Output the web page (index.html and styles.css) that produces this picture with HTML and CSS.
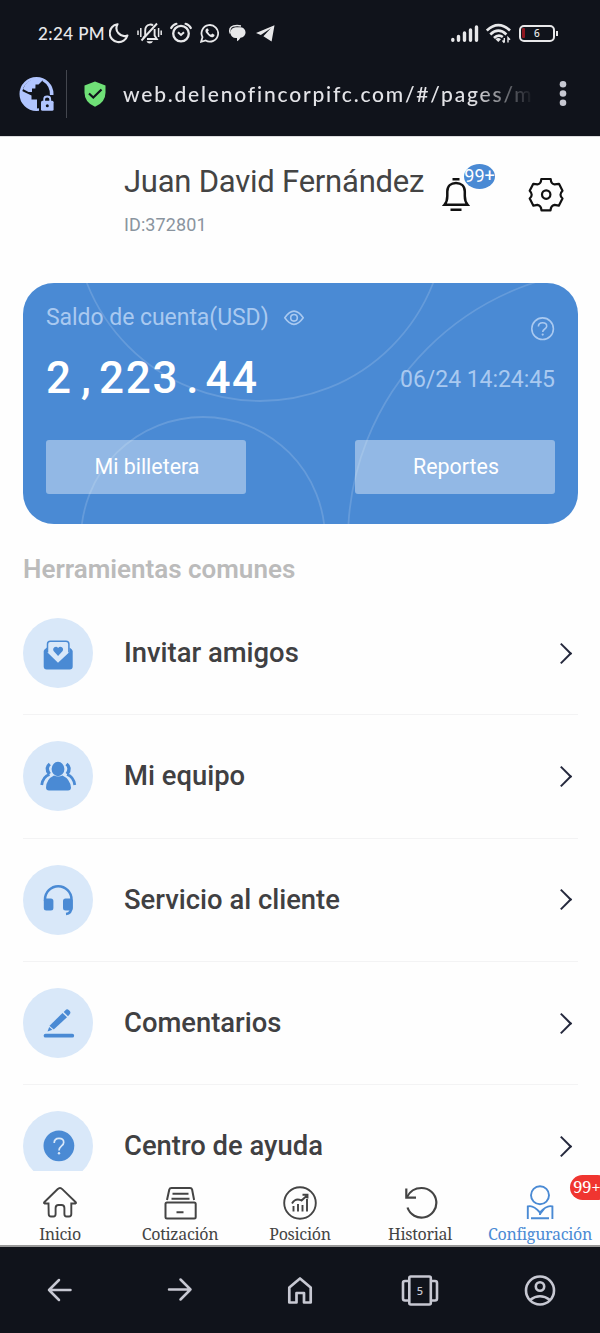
FILE: index.html
```html
<!DOCTYPE html>
<html lang="es">
<head>
<meta charset="utf-8">
<title>Configuración</title>
<link rel="stylesheet" href="styles.css">
</head>
<body>
<div class="phone">
  <header class="chrome">
    <div class="status">
      <span class="time">2:24 PM</span>
      <div class="status-icons">
        <svg width="20" height="22" viewBox="109 22 20 22"><path d="M117.5 24.2A9 9 0 1 0 127.4 35.5A8 8 0 0 1 117.5 24.2Z" fill="none" stroke="#e8e8ea" stroke-width="2.1" stroke-linejoin="round"/></svg>
        <svg width="25" height="22" viewBox="137 22 25 22"><g fill="none" stroke="#e8e8ea" stroke-width="1.9"><path d="M143.5 39V37.5L145.2 35.5V30.5Q145.2 25.5 149.8 24.6Q152 24.3 153 25.6M154.6 29V35.5L156.8 39H147M157 23.5L141.5 40.5"/><path d="M138 30.5V35M140.8 28V37M158.6 28V37M161.2 30.5V35" stroke-width="1.5"/></g><path d="M146.5 41.3H153Q152 43.6 149.7 43.6T146.5 41.3Z" fill="#e8e8ea"/></svg>
        <svg width="22" height="22" viewBox="170 22 22 22"><g fill="none" stroke="#e8e8ea"><circle cx="181" cy="33.6" r="7.8" stroke-width="2.3"/><path d="M171.2 28Q172.5 25 176.4 23.8M190.8 28Q189.5 25 185.6 23.8" stroke-width="2.2" stroke-linecap="round"/><path d="M178 32.3L181 35L184 32.3" stroke-width="2"/></g></svg>
        <svg width="19" height="22" viewBox="200 22 19 22"><path d="M201.1 41.8L202.5 37.2A8.3 8.3 0 1 1 205.7 40.5Z" fill="none" stroke="#e8e8ea" stroke-width="1.8"/><path d="M206.7 28.4C205 29.5 205 31.5 206.7 33.6C209 36.6 211.5 37.8 213.2 37C214.6 36.4 214.6 35.4 214.4 34.7L212.3 33.6L211 34.8Q208.8 34 207.8 31.6L208.8 30.5L207.9 28.4Z" fill="#e8e8ea"/></svg>
        <svg width="21" height="22" viewBox="227 22 21 22"><path d="M235.8 27.2H240A5.3 5.3 0 0 1 240.5 37.8Q239.3 40.2 237 41.3V38H235.8A5.4 5.4 0 0 1 235.8 27.2Z" fill="#e8e8ea"/><path d="M230.3 33.5Q228.3 27.5 233.5 25.9Q237 25.2 241 25.9" fill="none" stroke="#e8e8ea" stroke-width="1.5"/></svg>
        <svg width="19" height="22" viewBox="256 22 19 22"><path d="M274.5 25.2L256 33.1L260.8 35L270.8 28.3L263.4 36.2L271.6 41.4Z" fill="#e8e8ea"/></svg>
      </div>
      <div class="device-icons">
        <svg width="28" height="22" viewBox="452 22 28 22"><path d="M453.8 40.3V39.5M459.5 40.3V36.5M465.5 40.3V33M471.5 40.3V30M477.5 40.3V27" stroke="#e8e8ea" stroke-width="3.4" stroke-linecap="round"/></svg>
        <svg width="26" height="22" viewBox="486 22 26 22"><g fill="none" stroke="#e8e8ea" stroke-width="2.7"><path d="M486.8 30.5Q498.3 19.8 510 30.5M490.3 34.4Q498.3 27 506.4 34.4M494 38Q498.3 33.8 502.8 37"/></g><path d="M495.5 39.2Q498.3 37 501 39.2L498.3 42Z" fill="#e8e8ea"/><path d="M504.3 38V42.5M502.5 40.5L504.3 42.7M508 42.5V37.5L510 39.7" fill="none" stroke="#e8e8ea" stroke-width="1.4"/></svg>
        <div class="battery"><i></i><span>6</span></div>
      </div>
    </div>
    <div class="urlbar">
      <svg class="globe" width="36" height="36" viewBox="19 75 36 36"><circle cx="36.5" cy="93" r="15.7" fill="none" stroke="#b1c5ff" stroke-width="2.6"/><path d="M22 90L31.5 94.5V98.5H37V108.8Q29 109 24 103Q20 97 22 90Z" fill="#b1c5ff"/><path d="M23 88Q26 79.5 35 77.5H42V80L38.5 83.5H35.5V87.5H32V91H28.5Z" fill="#b1c5ff"/><path d="M42.5 79.5Q51 83 51.2 92L50 96L42 95L36.5 93.8H31.5V91.5L35.7 88.2L36 84H39.8Q42.8 83 42.5 79.5Z" fill="#10131b"/><path d="M39 94H56V112H39Z" fill="#10131b"/><path d="M51.2 94Q51.5 84 43 79" fill="none" stroke="#b1c5ff" stroke-width="2.6"/><rect x="41" y="99.8" width="12.6" height="10" rx="1.5" fill="#b1c5ff"/><path d="M44.2 100.5V98Q44.2 95.5 47.2 95.5T50.2 98V100.5" fill="none" stroke="#b1c5ff" stroke-width="1.8"/><circle cx="47.3" cy="104.8" r="1.5" fill="#10131b"/></svg>
      <i class="divider"></i>
      <svg class="shield" width="22" height="26" viewBox="83.5 80.5 22 26"><path d="M94.5 81L105 85V92Q105 102 94.5 106.2Q84 102 84 92V85Z" fill="#6fe077"/><path d="M88.5 93L92.8 97L101 89" fill="none" stroke="#10131b" stroke-width="2.2"/></svg>
      <span class="url">web.delenofincorpifc.com/#/pages/m</span>
      <svg class="dots" width="8" height="28" viewBox="559 80 8 28"><g fill="#c7c8d2"><circle cx="563" cy="84.3" r="3.3"/><circle cx="563" cy="93.5" r="3.3"/><circle cx="563" cy="102.7" r="3.3"/></g></svg>
    </div>
  </header>

  <main class="page">
    <section class="profile">
      <div class="who">
        <h1>Juan David Fernández</h1>
        <p>ID:372801</p>
      </div>
      <div class="bell">
        <svg width="28" height="36" viewBox="442 177 28 36"><path d="M452.5 179.2H459.5M450.5 209.7H461.5" stroke="#111" stroke-width="2.6"/><path d="M444.5 204.8Q447.3 201.5 447.3 196V191.5C447.3 186 451 183 456 183S464.8 186 464.8 191.5V196Q464.8 201.5 467.6 204.8Z" fill="none" stroke="#111" stroke-width="2.5"/></svg>
        <span class="bell-badge">99+</span>
      </div>
      <svg class="gear" width="36" height="36" viewBox="528 177 36 36"><path d="M541.3 179H550.7Q551 184 554.5 184.4L559 183.8L562.5 190.8Q558.5 194.8 562.5 198.5L558.8 205.7L554.5 204.9Q551 205.5 550.5 210.3H541.5Q541 205.5 537.5 204.9L533.4 205.7L529.7 198.5Q533.7 194.8 529.7 190.8L533.3 183.8L537.5 184.4Q541 184 541.3 179Z" fill="none" stroke="#111" stroke-width="2.2" stroke-linejoin="round"/><circle cx="546.2" cy="194.6" r="4.2" fill="none" stroke="#111" stroke-width="2.2"/></svg>
    </section>

    <section class="card">
      <svg class="rings" width="555" height="241" viewBox="23 283 555 241"><g fill="none" stroke="#fff" stroke-opacity=".15" stroke-width="1.8"><circle cx="260" cy="215" r="186"/><circle cx="203" cy="539" r="122"/><circle cx="619" cy="540" r="271"/></g></svg>
      <div class="card-head">
        <span class="label">Saldo de cuenta(USD)</span>
        <svg class="eye" width="20" height="16" viewBox="284 310 20 16"><g fill="none" stroke="#a9c9f0" stroke-width="1.6"><path d="M284.8 317.8Q294 304.5 303.2 317.8Q294 331 284.8 317.8Z"/><circle cx="294" cy="317.8" r="3.3"/></g></svg>
        <svg class="help" width="24" height="24" viewBox="531 317 24 24"><g fill="none" stroke="#a9c9f0" stroke-width="1.6"><circle cx="541.7" cy="328.7" r="10.8" transform="translate(.9)"/><path d="M538.4 326.5Q538.4 322.8 542.6 322.8T546.7 326.3C546.7 329 542.7 329 542.7 332"/></g><circle cx="542.7" cy="334.6" r="1.1" fill="#a9c9f0"/></svg>
      </div>
      <div class="balance">
        <strong>2<span>,</span>223<span>.</span>44</strong>
        <time>06/24 14:24:45</time>
      </div>
      <div class="actions"><button>Mi billetera</button><button>Reportes</button></div>
    </section>

    <h2>Herramientas comunes</h2>
    <ul class="tools">
      <li><i class="disc"><svg width="40" height="40" viewBox="38 633 40 40"><path d="M43.7 651Q43.7 649.5 47 647.5V652L58 662.8L69.5 652V647.5Q72.7 649.5 72.7 651V666.5Q72.7 669.5 69.7 669.5H46.7Q43.7 669.5 43.7 666.5Z" fill="#4a8ad4"/><path d="M47.5 652.5V644Q47.5 641.2 50.3 641.2H66Q68.9 641.2 68.9 644V652.5" fill="none" stroke="#4a8ad4" stroke-width="1.5"/><path d="M58.1 656L53.8 651.3Q52.3 649 54.3 647.3Q56.5 645.8 58.1 648Q59.8 645.8 62 647.3Q64 649 62.4 651.3Z" fill="#4a8ad4"/></svg></i><span>Invitar amigos</span><b class="chev"></b></li>
      <li><i class="disc"><svg width="40" height="40" viewBox="38 756.5 40 40"><g fill="#4a8ad4"><ellipse cx="58" cy="769.5" rx="6.4" ry="7.2"/><path d="M46 788Q46.5 779.5 54 776Q58 778 62.5 776Q70 779.5 71 788Q71 791 68 791H49Q46 791 46 788Z"/></g><g fill="none" stroke="#4a8ad4"><path d="M49.8 764.5Q44.8 768.5 49.5 774.5M66.5 764.5Q71.5 768.5 67 774.5" stroke-width="3.4"/><path d="M49.5 775Q43 777 41.7 785.5M67 775Q73.5 777 74.8 785.5" stroke-width="2.8"/></g></svg></i><span>Mi equipo</span><b class="chev"></b></li>
      <li><i class="disc"><svg width="40" height="40" viewBox="38 880 40 40"><path d="M45 901V899.5A13.2 13.2 0 0 1 71.5 899.5V907Q71.5 913.5 66 914" fill="none" stroke="#4a8ad4" stroke-width="2.5"/><rect x="43.8" y="898.5" width="9.6" height="12" rx="2.5" fill="#4a8ad4"/><rect x="63" y="898.5" width="9.7" height="12" rx="2.5" fill="#4a8ad4"/></svg></i><span>Servicio al cliente</span><b class="chev"></b></li>
      <li><i class="disc"><svg width="40" height="40" viewBox="38 1003 40 40"><path d="M45.5 1035.7H72.3" stroke="#4a8ad4" stroke-width="3.7" stroke-linecap="round"/><path d="M47.5 1031.5L49.8 1025.5L62.5 1013L67 1017.2L54 1029.2Z" fill="#4a8ad4"/><path d="M63.7 1011.9L66.2 1009.6Q67.5 1008.8 68.7 1009.9L70 1011.3Q71 1012.7 69.9 1014L68 1016.2Z" fill="#4a8ad4"/><path d="M49 1026.2L53.4 1030" stroke="#d9e8f9" stroke-width="1.1"/></svg></i><span>Comentarios</span><b class="chev"></b></li>
      <li><i class="disc"><svg width="40" height="40" viewBox="38 1126 40 40"><circle cx="58.9" cy="1145.8" r="15.4" fill="#4a8ad4"/><path d="M54.2 1143Q54.2 1138.3 59 1138.3T63.7 1142.5C63.7 1146 59 1146 59 1150.5" fill="none" stroke="#d9e8f9" stroke-width="1.7"/><circle cx="59" cy="1153.3" r="1.2" fill="#d9e8f9"/></svg></i><span>Centro de ayuda</span><b class="chev"></b></li>
    </ul>
  </main>

  <nav class="tabs">
    <a><svg width="36" height="36" viewBox="42 1185 36 36"><path d="M48.5 1203.5H44.5Q43.5 1203 44.5 1202L57.5 1189.3Q60 1186.8 62.5 1189.3L75.5 1202Q76.5 1203 75.5 1203.5H71.3V1214Q71.3 1216.5 69 1216.5H66.5Q64.4 1216.5 64.4 1214V1208Q64.4 1205 61.5 1205H58.5Q55.6 1205 55.6 1208V1214Q55.6 1216.5 53.5 1216.5H51Q48.7 1216.5 48.7 1214Z" fill="none" stroke="#444" stroke-width="1.9"/></svg><span>Inicio</span></a>
    <a><svg width="36" height="36" viewBox="162.5 1185 36 36"><g fill="none" stroke="#444" stroke-width="2"><rect x="166" y="1202.5" width="30.2" height="16" rx="1.5"/><path d="M167.5 1200L169.8 1189.5Q170.2 1188 172 1188H190.5Q192.2 1188 192.6 1189.5L194.6 1200M173 1193.7H189M172 1198.7H190M177 1212.3H184"/></g></svg><span>Cotización</span></a>
    <a><svg width="36" height="36" viewBox="282.5 1184.5 36 36"><g fill="none" stroke="#444" stroke-width="1.9"><circle cx="300.5" cy="1202.5" r="15.8"/><path d="M294 1211V1205.5M298.5 1211V1203.5M303 1211V1204.5M307.5 1211V1198.5M292.5 1203Q296 1197 302 1200L307 1195.5M303 1194.3H308V1198"/></g></svg><span>Posición</span></a>
    <a><svg width="36" height="36" viewBox="402 1185 36 36"><g fill="none" stroke="#444" stroke-width="2.2"><path d="M407 1197Q411.5 1188 421.5 1188A14.8 14.8 0 1 1 407.5 1207.5"/><path d="M406.3 1188.5V1197.7H416"/></g></svg><span>Historial</span></a>
    <a class="active"><svg width="36" height="36" viewBox="522 1185 36 36"><g fill="none" stroke="#4a8ad4" stroke-width="1.9"><circle cx="540" cy="1195.3" r="9"/><path d="M527.8 1219V1206.5Q533 1204.5 540 1212.5Q547 1204.5 552.4 1206.5V1219M531 1218.3H549M540 1212.5V1215M540 1214L544 1209"/></g></svg><span>Configuración</span><em>99+</em></a>
  </nav>

  <footer class="browser-nav">
    <svg width="28" height="36" viewBox="46 1272 28 36"><path d="M70.5 1290H49M59 1280L49 1290L59 1300" fill="none" stroke="#c7c8d2" stroke-width="2.5" stroke-linecap="round" stroke-linejoin="round"/></svg>
    <svg width="28" height="36" viewBox="166 1272 28 36"><path d="M169 1289.5H190.5M180.5 1279.5L190.5 1289.5L180.5 1299.5" fill="none" stroke="#c7c8d2" stroke-width="2.5" stroke-linecap="round" stroke-linejoin="round"/></svg>
    <svg width="28" height="36" viewBox="286 1272 28 36"><path d="M289.3 1302.5V1287.5L300 1278.5L310.7 1287.5V1302.5H304V1293H296.5V1302.5Z" fill="none" stroke="#c7c8d2" stroke-width="2.7" stroke-linejoin="round"/></svg>
    <svg width="40" height="36" viewBox="400 1272 40 36"><g fill="none" stroke="#c7c8d2" stroke-width="2.6"><rect x="409.3" y="1276.5" width="21.5" height="28" rx="1.5"/><path d="M409 1281H405Q403 1281 403 1283V1298.5Q403 1300.5 405 1300.5H409M431 1281H435Q437 1281 437 1283V1298.5Q437 1300.5 435 1300.5H431"/></g><text x="420" y="1294.5" text-anchor="middle" class="count">5</text></svg>
    <svg width="36" height="36" viewBox="522 1272 36 36"><g fill="none" stroke="#c7c8d2" stroke-width="2.6"><circle cx="540" cy="1290.5" r="14"/><circle cx="540" cy="1286.5" r="4.2"/><path d="M530 1300Q540 1292.5 550 1300"/></g></svg>
  </footer>
</div>
</body>
</html>
```
FILE: styles.css
```css
* { box-sizing: border-box; }
body, h1, h2, p, ul { margin: 0; padding: 0; }
body { font-family: Roboto, "Noto Sans", sans-serif; background: #10131b; }
svg { display: block; flex: none; }
.phone { width: 600px; height: 1333px; overflow: hidden; display: flex; flex-direction: column; }
.chrome { height: 136px; background: #10131b; flex: none; }
.status { height: 66px; display: flex; align-items: center; padding-left: 38px; padding-right: 41px; }
.time { width: 71px; padding-top: 2px; font: 500 17px/22px Lato, sans-serif; color: #e8e8ea; white-space: nowrap; letter-spacing: .4px; }
.status-icons { display: flex; gap: 8px; }
.device-icons { display: flex; align-items: center; gap: 7px; margin-left: auto; }
.battery { width: 36px; height: 17px; border: 2px solid #e8e8ea; border-radius: 5px; display: flex; align-items: center; position: relative; margin-right: 4px; }
.battery i { width: 3px; height: 10px; background: #8f1720; margin-left: 1px; border-radius: 1px; }
.battery span { font: 500 10px/13px "Noto Sans", sans-serif; color: #e8e8ea; margin-left: 9px; }
.battery::after { content: ""; position: absolute; right: -5px; top: 4px; width: 2px; height: 5px; background: #e8e8ea; }
.urlbar { height: 56px; display: flex; align-items: center; padding-left: 19px; }
.divider { width: 1px; height: 48px; background: #43464e; margin-left: 11px; margin-top: -1px; }
.shield { margin-left: 17px; }
.url { width: 411px; margin-left: 17px; overflow: hidden; white-space: nowrap; font: 500 21px/30px Lato, sans-serif; letter-spacing: 1.8px; color: #e4e4e8; -webkit-mask-image: linear-gradient(90deg, #000 85%, transparent); mask-image: linear-gradient(90deg, #000 85%, transparent); }
.dots { margin-left: 25px; }

.page { height: 1035px; overflow: hidden; background: #fefefe; border-top: 1px solid #dcdcde; flex: none; }
.profile { height: 146px; display: flex; align-items: flex-start; padding: 26px 0 0 124px; }
.who { width: 318px; white-space: nowrap; }
h1 { font-weight: 400; font-size: 31px; line-height: 38px; letter-spacing: -.23px; color: #444; }
.who p { font-size: 18px; line-height: 22px; margin-top: 13px; letter-spacing: .1px; color: #8a949e; }
.bell { position: relative; margin-top: 14px; }
.bell-badge { position: absolute; left: 22px; top: -13px; width: 31px; height: 25px; border-radius: 50%; background: #4a8ad4; color: #fff; font-size: 18px; line-height: 24px; display: flex; justify-content: center; }
.gear { margin: 14px 0 0 58px; }

.card { position: relative; height: 241px; margin: 0 22px 0 23px; border-radius: 31px; background: #4a8ad4; overflow: hidden; padding: 22px 23px 0; }
.rings { position: absolute; left: 0; top: 0; }
.card-head, .balance, .actions { position: relative; display: flex; }
.card-head { height: 44px; color: #a9c9f0; }
.label { font-size: 23px; line-height: 26px; width: 238px; white-space: nowrap; letter-spacing: -.05px; }
.eye { margin-top: 5px; }
.help { margin: 12px 0 0 auto; }
.balance { height: 91px; justify-content: space-between; }
.balance strong { font-weight: 500; font-size: 44px; line-height: 58px; letter-spacing: 1.65px; color: #fff; }
.balance strong span { display: inline-block; width: 26.4px; text-align: center; letter-spacing: 0; }
.balance time { font-size: 23px; line-height: 28px; margin-top: 17px; letter-spacing: -.05px; color: #a9c9f0; white-space: nowrap; }
.actions { justify-content: space-between; }
.actions button { width: 200px; height: 54px; border: 0; border-radius: 3px; background: rgba(232,239,248,.46); color: #fff; font: 400 21.4px/53px Roboto, sans-serif; padding: 0 0 1px 2px; }

h2 { font-size: 26px; line-height: 30px; font-weight: 600; color: #bbb; margin: 30px 0 0 23px; }
.tools { list-style: none; margin: 8px 22px 0 23px; }
.tools li { height: 123.3px; display: flex; align-items: center; border-bottom: 1px solid #f3f3f4; }
.disc { width: 70px; height: 70px; border-radius: 50%; background: #d9e8f9; display: flex; align-items: center; justify-content: center; }
.tools span { font-weight: 500; font-size: 27.4px; line-height: 32px; color: #404042; margin-left: 31px; }
.chev { width: 15px; height: 15px; border: solid #24283c; border-width: 2px 2px 0 0; transform: rotate(45deg); margin: 0 9px 0 auto; }

.tabs { height: 76px; background: #fefefe; border-bottom: 2px solid #999; display: flex; flex: none; }
.tabs a { position: relative; width: 120px; display: flex; flex-direction: column; align-items: center; padding-top: 14px; color: #444; font: 16px/22px "Noto Serif", "DejaVu Serif", serif; font-stretch: condensed; letter-spacing: -.3px; }
.tabs a span { margin-top: 2px; white-space: nowrap; }
.tabs .active { color: #4a8ad4; }
.tabs em { position: absolute; left: 90px; top: 4px; width: 40px; height: 25px; border-radius: 13px; background: #f03530; color: #fff; font-style: normal; font-size: 17px; line-height: 23px; padding-left: 3px; letter-spacing: -.4px; }
.browser-nav { height: 86px; background: #10131b; display: grid; grid-template-columns: repeat(5, 120px); justify-items: center; align-items: center; flex: none; }
.count { font: 500 11px "Noto Sans", sans-serif; fill: #c7c8d2; }
```
